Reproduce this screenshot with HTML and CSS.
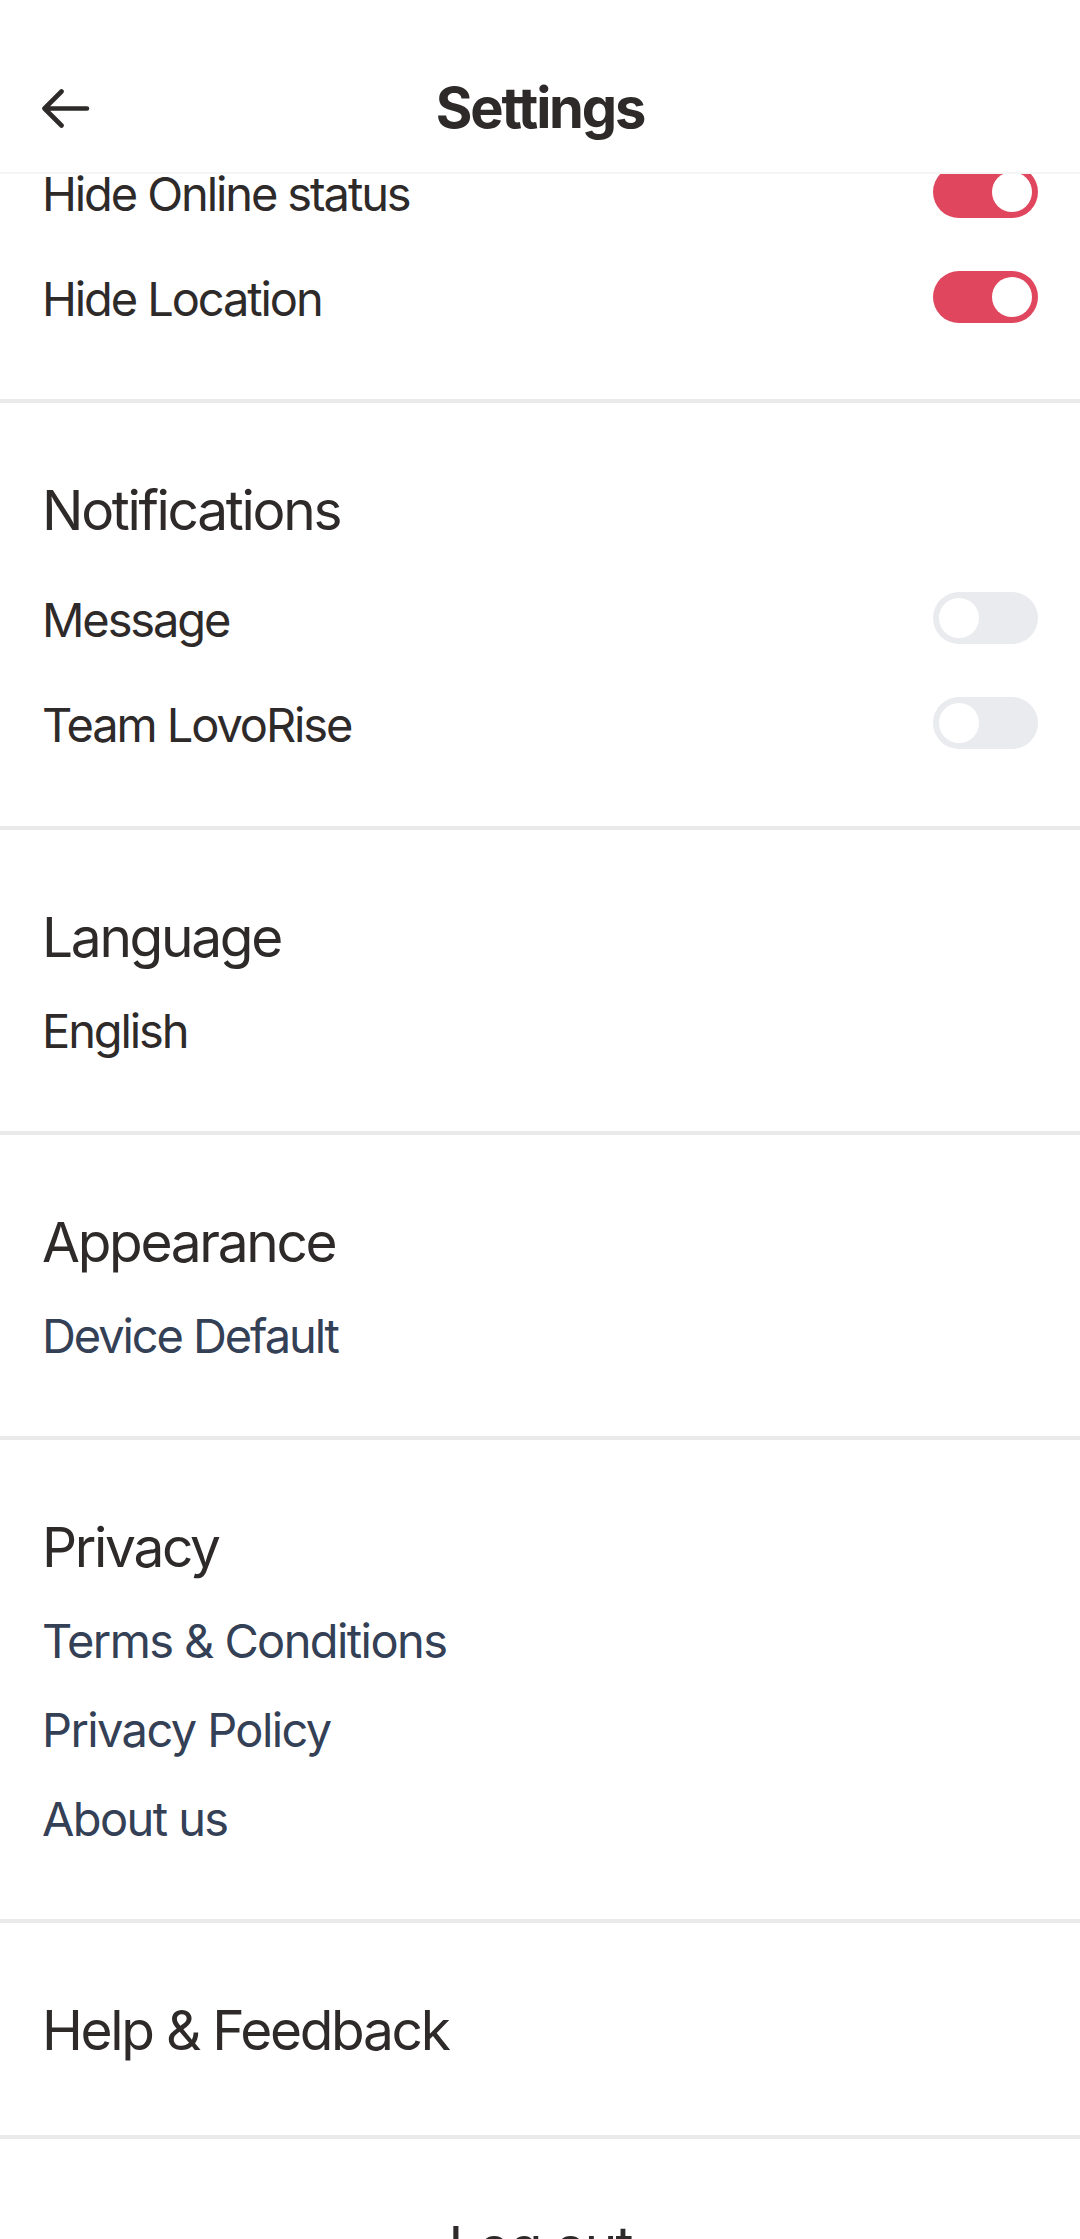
FILE: index.html
```html
<!DOCTYPE html>
<html lang="en">
<head>
<meta charset="utf-8">
<title>Settings</title>
<link rel="stylesheet" href="styles.css">
</head>
<body>
<div class="screen">
  <header class="topbar">
    <div class="topbar-inner">
      <button class="back" aria-label="Back">
        <svg class="back-icon" viewBox="0 0 50 40" width="50" height="40" aria-hidden="true">
          <path d="M47 20.5H5M21.5 3.5L4.5 20.5L21.5 37.5" fill="none" stroke="#2E2A2A" stroke-width="4.6" stroke-linecap="round" stroke-linejoin="round"/>
        </svg>
      </button>
      <h1 class="title">Settings</h1>
      <span class="spacer"></span>
    </div>
  </header>

  <main class="content">
    <section class="section section-scrolled">
      <div class="toggle-list">
        <div class="toggle-row">
          <span class="label">Hide Online status</span>
          <span class="switch is-on"><span class="knob"></span></span>
        </div>
        <div class="toggle-row">
          <span class="label">Hide Location</span>
          <span class="switch is-on"><span class="knob"></span></span>
        </div>
      </div>
    </section>

    <section class="section section-toggles">
      <h2 class="heading">Notifications</h2>
      <div class="toggle-list">
        <div class="toggle-row">
          <span class="label">Message</span>
          <span class="switch"><span class="knob"></span></span>
        </div>
        <div class="toggle-row">
          <span class="label">Team LovoRise</span>
          <span class="switch"><span class="knob"></span></span>
        </div>
      </div>
    </section>

    <section class="section">
      <h2 class="heading">Language</h2>
      <p class="item">English</p>
    </section>

    <section class="section">
      <h2 class="heading">Appearance</h2>
      <p class="item item-link item-tight">Device Default</p>
    </section>

    <section class="section">
      <h2 class="heading">Privacy</h2>
      <a class="item item-link">Terms &amp; Conditions</a>
      <a class="item item-link">Privacy Policy</a>
      <a class="item item-link">About us</a>
    </section>

    <section class="section">
      <h2 class="heading">Help &amp; Feedback</h2>
    </section>

    <section class="section section-logout">
      <button class="logout">Log out</button>
    </section>
  </main>
</div>
</body>
</html>
```

FILE: styles.css
```css
* {
  box-sizing: border-box;
}

html, body {
  margin: 0;
  padding: 0;
  background: #ffffff;
}

body {
  font-family: Inter, "Noto Sans", Roboto, sans-serif;
  color: #2E2A2A;
}

.screen {
  width: 1080px;
  height: 2239px;
  overflow: hidden;
  display: flex;
  flex-direction: column;
}

.topbar {
  position: relative;
  z-index: 2;
  height: 174px;
  flex: 0 0 174px;
  background: #ffffff;
  border-bottom: 2px solid #F5F5F5;
  padding-top: 43px;
}

.topbar-inner {
  height: 129px;
  display: grid;
  grid-template-columns: 1fr auto 1fr;
  align-items: center;
  padding: 0 40px;
}

.back {
  justify-self: start;
  border: 0;
  background: none;
  padding: 0;
  width: 50px;
  height: 40px;
  display: flex;
}

.back-icon {
  display: block;
}

.title {
  margin: 0;
  font-size: 56px;
  font-weight: 700;
  line-height: 66px;
  letter-spacing: -2.2px;
  color: #2E2A2A;
}

.content {
  position: relative;
  z-index: 1;
  display: flex;
  flex-direction: column;
}

.section {
  display: flex;
  flex-direction: column;
  align-items: flex-start;
  gap: 32px;
  padding: 74px 42px 72px;
  border-bottom: 4px solid #EAEAEA;
}

.section-scrolled {
  margin-top: -8px;
  padding: 0 42px 76px;
}

.section-toggles {
  gap: 49px;
  padding-bottom: 77px;
}

.heading {
  margin: 0;
  font-size: 55px;
  font-weight: 400;
  line-height: 66px;
  letter-spacing: -2.3px;
  color: #2E2A2A;
}

.toggle-list {
  align-self: stretch;
  display: flex;
  flex-direction: column;
  gap: 53px;
}

.toggle-row {
  height: 52px;
  display: flex;
  align-items: center;
  justify-content: space-between;
}

.label,
.item {
  font-size: 47px;
  line-height: 57px;
  letter-spacing: -2.1px;
  color: #2E2A2A;
}

.label {
  padding-top: 3px;
}

.item {
  margin: 0;
  display: block;
  text-decoration: none;
}

.item-link {
  color: #344055;
  letter-spacing: -1.6px;
}

.item-link.item-tight {
  letter-spacing: -2.1px;
}

.switch {
  position: relative;
  width: 105px;
  height: 52px;
  border-radius: 26px;
  background: #EAEBEF;
  flex: 0 0 auto;
}

.switch.is-on {
  background: #E0475E;
}

.knob {
  position: absolute;
  top: 6px;
  left: 6px;
  width: 40px;
  height: 40px;
  border-radius: 50%;
  background: #ffffff;
}

.switch.is-on .knob {
  left: auto;
  right: 6px;
}

.section-logout {
  align-items: center;
  border-bottom: 0;
}

.logout {
  border: 0;
  background: none;
  padding: 0;
  font-family: inherit;
  font-size: 55px;
  line-height: 66px;
  letter-spacing: -2px;
  color: #2E2A2A;
}
```
